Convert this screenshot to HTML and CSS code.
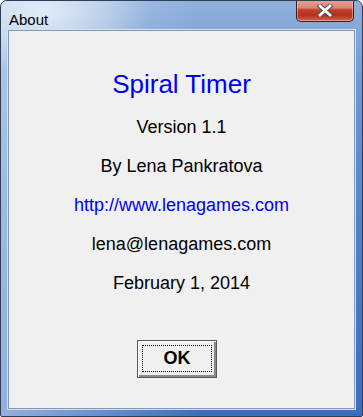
FILE: index.html
```html
<!DOCTYPE html>
<html lang="en">
<head>
<meta charset="utf-8">
<title>About</title>
<link rel="stylesheet" href="styles.css">
</head>
<body>
<div class="window">
  <div class="titlebar">
    <span class="title">About</span>
    <button class="close" type="button" aria-label="Close">
      <svg width="18" height="13" viewBox="0 0 18 13">
        <path d="M4 2 L14 11 M14 2 L4 11" stroke="#4a4a4a" stroke-width="4.6" stroke-linecap="square" fill="none"/>
        <path d="M4 2 L14 11 M14 2 L4 11" stroke="#ffffff" stroke-width="2.8" stroke-linecap="square" fill="none"/>
      </svg>
    </button>
  </div>
  <div class="client">
    <div class="app-name">Spiral Timer</div>
    <div class="line">Version 1.1</div>
    <div class="line">By Lena Pankratova</div>
    <div class="line link">http://www.lenagames.com</div>
    <div class="line">lena@lenagames.com</div>
    <div class="line">February 1, 2014</div>
    <div class="actions">
      <button class="ok" type="button"><span class="focus">OK</span></button>
    </div>
  </div>
</div>
</body>
</html>
```
FILE: styles.css
```css
html, body {
  margin: 0;
  padding: 0;
  background: #ffffff;
}

.window {
  box-sizing: border-box;
  width: 363px;
  height: 417px;
  border: 1px solid #2f3e55;
  border-radius: 7px 7px 2px 2px;
  background:
    radial-gradient(ellipse 110px 60px at 40px 10px, rgba(235,242,250,0.85), rgba(235,242,250,0) 100%),
    linear-gradient(to right, rgba(220,232,246,0.55), rgba(220,232,246,0) 55%),
    linear-gradient(to bottom, #8fb0dd 0%, #6f97d0 20%, #4f80c8 55%, #3a6dc2 100%);
  display: flex;
  flex-direction: column;
  padding: 0 7px 7px 7px;
  font-family: "Liberation Sans", Arial, sans-serif;
  overflow: hidden;
}

.titlebar {
  height: 29px;
  display: flex;
  align-items: flex-start;
  flex-shrink: 0;
}

.title {
  font-size: 15px;
  line-height: 18px;
  padding-top: 10px;
  padding-left: 1px;
  color: #000000;
}

.close {
  margin-left: auto;
  margin-top: -1px;
  margin-right: 1px;
  width: 58px;
  height: 22px;
  padding: 0;
  border: 1px solid #3f1c16;
  border-top: none;
  border-radius: 0 0 5px 5px;
  background: linear-gradient(to bottom, #e7a597 0%, #d98373 38%, #c0432d 46%, #b42f1a 72%, #cf6650 100%);
  box-shadow: inset 0 0 0 1px rgba(255,215,205,0.5);
  display: flex;
  align-items: center;
  justify-content: center;
}

.client {
  flex: 1;
  background: #f0f0f0;
  border: 1px solid #8197b6;
  box-shadow: 0 0 0 1px #d6e2f2;
  display: flex;
  flex-direction: column;
  align-items: center;
  padding-top: 38px;
  color: #000000;
}

.app-name {
  font-size: 26px;
  line-height: 30px;
  color: #0000ee;
}

.line {
  font-size: 18px;
  line-height: 22px;
  margin-top: 17px;
}

.link {
  color: #0000ee;
}

.actions {
  display: flex;
  justify-content: center;
  align-self: stretch;
  padding-right: 9px;
  margin-top: 46px;
}

.ok {
  box-sizing: border-box;
  width: 80px;
  height: 38px;
  padding: 3px;
  background: #f0f0f0;
  border: 1px solid #5a5a5a;
  box-shadow: inset 1px 1px 0 #ffffff, inset -2px -2px 0 #8a8a8a;
  display: flex;
  font-family: "Liberation Sans", Arial, sans-serif;
}

.focus {
  flex: 1;
  border: 1px dotted #000000;
  display: flex;
  align-items: center;
  justify-content: center;
  font-size: 18px;
  font-weight: bold;
  color: #000000;
  margin: 1px 1px 2px 1px;
}
```
